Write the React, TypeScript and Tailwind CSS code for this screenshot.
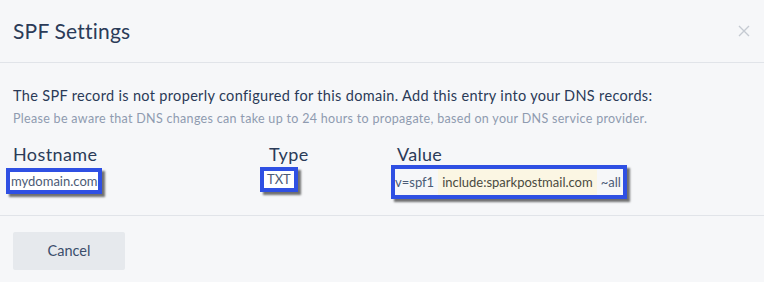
import React from "react";

export default function App() {
  const font = { fontFamily: "Lato, 'Open Sans', sans-serif" };
  return (
    <div className="w-[764px] h-[282px] bg-[#f6f7f9] overflow-hidden" style={font}>
      <div className="h-[63px] border-b border-[#e1e4e9] flex items-center justify-between pl-[13px] pr-[14px]">
        <div className="text-[21px] text-[#2b3b58] leading-none -mt-[2px] tracking-[0.2px]">SPF Settings</div>
        <svg width="12" height="12" viewBox="0 0 12 12" className="-mt-[1px]">
          <path d="M1 1L11 11M11 1L1 11" stroke="#c5cad2" strokeWidth="1.4" />
        </svg>
      </div>
      <div className="h-[153px] border-b border-[#e1e4e9] pl-[13px] pt-[24px]">
        <div className="text-[14.5px] text-[#2a3a57] leading-[18px] tracking-[0.33px]">
          The SPF record is not properly configured for this domain. Add this entry into your DNS records:
        </div>
        <div className="text-[12.5px] text-[#8f9bb0] leading-[16px] mt-[6px] tracking-[0.31px]">
          Please be aware that DNS changes can take up to 24 hours to propagate, based on your DNS service provider.
        </div>
        <div className="flex mt-[16px]">
          <div className="w-[256px] flex flex-col">
            <div className="text-[18px] text-[#2b3b58] leading-[22px] tracking-[0.4px]">Hostname</div>
            <div className="mt-[3px] -ml-[7px]">
              <span className="inline-block border-4 border-[#2f50e3] bg-white shadow-[3px_3px_2px_rgba(0,0,0,0.55)] text-[13px] text-[#4b5b76] leading-[18px] px-[1px]">
                mydomain.com
              </span>
            </div>
          </div>
          <div className="w-[128px] flex flex-col">
            <div className="text-[18px] text-[#2b3b58] leading-[22px] tracking-[0.4px]">Type</div>
            <div className="mt-[1px] -ml-[9px]">
              <span className="inline-block border-4 border-[#2f50e3] bg-white shadow-[3px_3px_2px_rgba(0,0,0,0.55)] text-[13px] text-[#4b5b76] leading-[17px] px-[3px]">
                TXT
              </span>
            </div>
          </div>
          <div className="flex flex-col">
            <div className="text-[18px] text-[#2b3b58] leading-[22px] tracking-[0.3px]">Value</div>
            <div className="mt-0 -ml-[6px]">
              <span className="inline-flex items-center border-4 border-[#2f50e3] bg-[#f6f7f9] shadow-[3px_3px_2px_rgba(0,0,0,0.55)] text-[13px] text-[#4b5b76] leading-[26px] pr-[2px]">
                <span>v=spf1</span>
                <span className="bg-[#fbf6e3] text-[#4a4a40] px-[4px] mx-[4px]">include:sparkpostmail.com</span>
                <span>~all</span>
              </span>
            </div>
          </div>
        </div>
      </div>
      <div className="pl-[13px] pt-[16px]">
        <button className="w-[112px] h-[38px] bg-[#e6e9ed] rounded-[2px] text-[14.5px] text-[#3b4d6b]" style={font}>
          Cancel
        </button>
      </div>
    </div>
  );
}
